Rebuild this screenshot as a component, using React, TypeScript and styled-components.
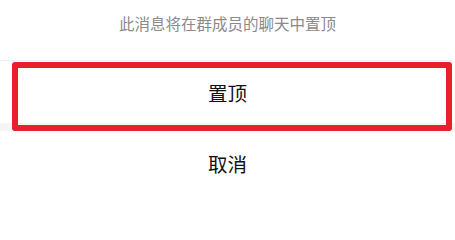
import styled, { createGlobalStyle } from "styled-components"

const GlobalStyle = createGlobalStyle`
  html, body {
    margin: 0;
    padding: 0;
    background: #ffffff;
  }
  body {
    font-family: "Noto Sans CJK SC", "Noto Sans", sans-serif;
  }
`

const Sheet = styled.div`
  /* the action sheet */
  position: relative;
  width: 455px;
  height: 206px;
  display: flex;
  flex-direction: column;
  background: #ffffff;
  overflow: hidden;
`

const Header = styled.div`
  height: 46px;
  padding-bottom: 14px;
  display: flex;
  align-items: center;
  justify-content: center;
  font-size: 15.5px;
  color: #8a8a8a;
  border-bottom: 1px solid #f0f0f0;
`

const Option = styled.div<{ $height: number }>`
  height: ${(p) => p.$height}px;
  display: flex;
  align-items: center;
  justify-content: center;
  font-size: 19.5px;
  color: #111111;
  background: #ffffff;
`

const Gap = styled.div`
  height: 8px;
  background: #f5f5f5;
`

const Highlight = styled.div`
  /* red annotation frame over the option */
  position: absolute;
  left: 12px;
  top: 62px;
  width: 428px;
  height: 57px;
  border: 6px solid #e8202c;
  border-radius: 3px;
  pointer-events: none;
`

const App = () => {
  return (
    <>
      <GlobalStyle />
      <Sheet>
        <Header>此消息将在群成员的聊天中置顶</Header>
        <Option $height={62}>置顶</Option>
        <Gap />
        <Option $height={64}>取消</Option>
        <Highlight />
      </Sheet>
    </>
  )
}

export default App
